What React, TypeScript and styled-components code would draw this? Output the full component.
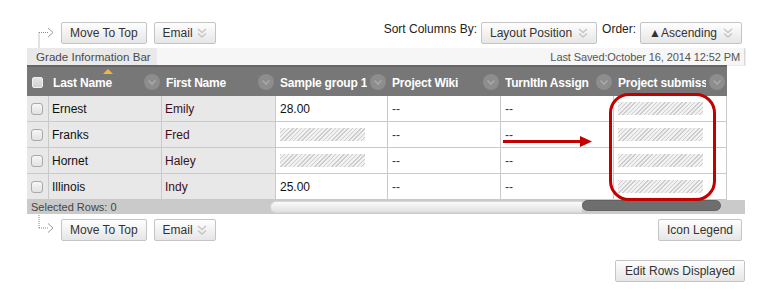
import React from "react";
import styled, { createGlobalStyle } from "styled-components";

const GlobalStyle = createGlobalStyle`
  html, body { margin: 0; padding: 0; background: #ffffff; }
  body { font-family: "Liberation Sans", Arial, sans-serif; }
  * { box-sizing: border-box; }
`;

const Page = styled.div`
  position: relative;
  width: 765px;
  height: 290px;
  padding-top: 22px;
  overflow: hidden;
`;

const ActionRow = styled.div<{ $top?: number }>`
  display: flex;
  align-items: flex-start;
  justify-content: space-between;
  height: ${(p) => (p.$top !== undefined ? "22px" : "26px")};
  margin-top: ${(p) => p.$top ?? 0}px;
  padding-left: 36px;
  padding-right: 23px;
`;

const Group = styled.div`
  display: flex;
  align-items: flex-start;
`;

const FlowArrow = styled.svg<{ $shift?: number }>`
  display: block;
  flex: none;
  width: 20px;
  margin-right: 5px;
  margin-top: ${(p) => p.$shift ?? 0}px;
`;

const Button = styled.button<{ $gap?: number; $pad?: number }>`
  display: inline-flex;
  align-items: center;
  gap: ${(p) => p.$gap ?? 4}px;
  height: 22px;
  padding: 0 ${(p) => p.$pad ?? 8}px;
  margin: 0;
  font-family: "Liberation Sans", Arial, sans-serif;
  font-size: 12px;
  color: #333333;
  background: linear-gradient(#fefefe, #e6e6e6);
  border: 1px solid #c4c4c4;
  border-radius: 2px;
  white-space: nowrap;
  cursor: pointer;
  & + & {
    margin-left: 7px;
  }
`;

const Label = styled.span<{ $before?: number; $after?: number }>`
  font-size: 12px;
  line-height: 14px;
  color: #222222;
  margin-left: ${(p) => p.$before ?? 0}px;
  margin-right: ${(p) => p.$after ?? 4}px;
  white-space: nowrap;
`;

const InfoBar = styled.div`
  display: flex;
  justify-content: space-between;
  align-items: stretch;
  margin-left: 27px;
  width: 718px;
  height: 17px;
  background: #f6f6f6;
  border-right: 1px solid #d8d8d8;
  box-shadow: 1px 1px 0 #ececec;
`;

const InfoTab = styled.div`
  display: flex;
  align-items: center;
  padding: 0 6px 0 9px;
  background: #e9e9e9;
  font-size: 11.6px;
  color: #4a4a4a;
`;

const Saved = styled.div`
  display: flex;
  align-items: center;
  padding-right: 4px;
  font-size: 11px;
  letter-spacing: -0.1px;
  color: #555555;
`;

const Grid = styled.div`
  margin-left: 27px;
  width: 700px;
  display: grid;
  grid-template-columns: 22px 113px 114px 112px 113px 113px 113px;
`;

const HeadCell = styled.div`
  position: relative;
  height: 31px;
  display: flex;
  align-items: center;
  gap: 3px;
  padding-left: 4px;
  padding-right: 2px;
  background: #777777;
  border-top: 2px solid #666666;
  color: #ffffff;
  font-weight: bold;
  font-size: 12px;
  letter-spacing: -0.2px;
`;

const HeadText = styled.span`
  flex: 1;
  min-width: 0;
  overflow: hidden;
  white-space: nowrap;
  padding-top: 3px;
`;

const SortMark = styled.span`
  position: absolute;
  left: 54px;
  top: 2px;
  width: 0;
  height: 0;
  border-left: 5px solid transparent;
  border-right: 5px solid transparent;
  border-bottom: 5px solid #f4b53f;
`;

const HeadBox = styled.span`
  display: block;
  width: 11px;
  height: 11px;
  margin-left: 1px;
  margin-top: 1px;
  background: linear-gradient(#e4e4e4, #d2d2d2);
  border: 1px solid #efefef;
  border-radius: 2px;
`;

const Cell = styled.div<{ $shade?: boolean; $tone?: string; $pad?: number }>`
  height: 26px;
  display: flex;
  align-items: center;
  padding-left: ${(p) => p.$pad ?? 4}px;
  background: ${(p) => (p.$shade ? "#e8e8e8" : "#ffffff")};
  border-right: 1px solid #c9c9c9;
  border-bottom: 1px solid #c9c9c9;
  font-size: 12px;
  color: ${(p) => p.$tone ?? "#111111"};
  white-space: nowrap;
  overflow: hidden;
`;

const RowBox = styled.span`
  display: block;
  width: 12px;
  height: 12px;
  background: linear-gradient(#f6f6f6, #e2e2e2);
  border: 1px solid #a9a9a9;
  border-radius: 3px;
`;

const Hatch = styled.span`
  display: block;
  width: 85px;
  height: 13px;
  background: repeating-linear-gradient(
    135deg,
    #cdcdcd 0px,
    #cdcdcd 1px,
    #f1f1f1 1px,
    #f1f1f1 3px
  );
`;

const StatusBar = styled.div`
  display: flex;
  align-items: stretch;
  margin-left: 27px;
  width: 718px;
  height: 14px;
  background: #cacaca;
`;

const Selected = styled.div`
  width: 243px;
  padding-left: 4px;
  font-size: 11px;
  line-height: 14px;
  color: #444444;
`;

const Track = styled.div`
  flex: 1;
  display: flex;
  align-items: flex-start;
  padding-top: 1px;
`;

const TrackLight = styled.div`
  flex: 1;
  height: 12px;
  border-radius: 7px 0 0 7px;
  background: linear-gradient(#fbfbfb, #e0e0e0);
  border: 1px solid #d6d6d6;
  border-right: none;
`;

const Thumb = styled.div`
  width: 139px;
  height: 11px;
  margin-top: -1px;
  border-radius: 6px;
  background: #6e6e6e;
  border: 1px solid #626262;
`;

const TrackEnd = styled.div`
  width: 24px;
`;

const FooterRow = styled.div`
  display: flex;
  justify-content: flex-end;
  margin-top: 19px;
  padding-right: 20px;
`;

const Highlight = styled.div`
  position: absolute;
  left: 609px;
  top: 93px;
  width: 107px;
  height: 108px;
  border: 3.5px solid #c20000;
  border-radius: 20px;
  pointer-events: none;
`;

const Pointer = styled.svg`
  position: absolute;
  left: 503px;
  top: 135px;
  width: 90px;
  height: 13px;
  pointer-events: none;
`;

const DoubleChevron = () => (
  <svg width="10" height="10" viewBox="0 0 10 10" style={{ display: "block" }}>
    <polyline points="1,1 5,4.5 9,1" fill="none" stroke="#c7c7c7" strokeWidth="1.6" />
    <polyline points="1,5.5 5,9 9,5.5" fill="none" stroke="#c7c7c7" strokeWidth="1.6" />
  </svg>
);

const ColMenu = () => (
  <svg width="16" height="16" viewBox="0 0 16 16" style={{ display: "block", flex: "none" }}>
    <circle cx="8" cy="8" r="8" fill="#8d8d8d" />
    <polyline points="4.5,6.5 8,10 11.5,6.5" fill="none" stroke="#a9a9a9" strokeWidth="1.6" />
  </svg>
);

type Row = {
  last: string;
  first: string;
  grade: string | null;
};

const rows: Row[] = [
  { last: "Ernest", first: "Emily", grade: "28.00" },
  { last: "Franks", first: "Fred", grade: null },
  { last: "Hornet", first: "Haley", grade: null },
  { last: "Illinois", first: "Indy", grade: "25.00" },
];

const headers = [
  "Last Name",
  "First Name",
  "Sample group 1",
  "Project Wiki",
  "TurnItIn Assign",
  "Project submission",
];

const DASH = "#1d3a63";

export default function App() {
  return (
    <>
      <GlobalStyle />
      <Page>
        <ActionRow>
          <Group>
            <FlowArrow height="26" viewBox="0 0 20 26">
              <line x1="3" y1="10.5" x2="3" y2="26" stroke="#8a8a8a" strokeWidth="1" strokeDasharray="1 1" />
              <line x1="3" y1="10.5" x2="13" y2="10.5" stroke="#8a8a8a" strokeWidth="1" strokeDasharray="1 1" />
              <polyline points="12,6 17,10.5 12,15" fill="none" stroke="#9a9a9a" strokeWidth="1" />
            </FlowArrow>
            <Button>Move To Top</Button>
            <Button>
              Email <DoubleChevron />
            </Button>
          </Group>
          <Group>
            <Label>Sort Columns By:</Label>
            <Button $gap={6}>
              Layout Position <DoubleChevron />
            </Button>
            <Label $before={5} $after={4}>
              Order:
            </Label>
            <Button $gap={6} $pad={8}>
              ▲Ascending <DoubleChevron />
            </Button>
          </Group>
        </ActionRow>

        <InfoBar>
          <InfoTab>Grade Information Bar</InfoTab>
          <Saved>Last Saved:October 16, 2014 12:52 PM</Saved>
        </InfoBar>

        <Grid>
          <HeadCell>
            <HeadBox />
          </HeadCell>
          {headers.map((h, i) => (
            <HeadCell key={h}>
              {i === 0 && <SortMark />}
              <HeadText>{h}</HeadText>
              <ColMenu />
            </HeadCell>
          ))}

          {rows.map((r) => (
            <React.Fragment key={r.last}>
              <Cell $shade $pad={4}>
                <RowBox />
              </Cell>
              <Cell $shade $pad={3}>{r.last}</Cell>
              <Cell $shade $pad={3} $tone="#3d1019">
                {r.first}
              </Cell>
              <Cell>{r.grade ?? <Hatch />}</Cell>
              <Cell $tone={DASH}>--</Cell>
              <Cell $tone={DASH}>--</Cell>
              <Cell>
                <Hatch />
              </Cell>
            </React.Fragment>
          ))}
        </Grid>

        <StatusBar>
          <Selected>Selected Rows: 0</Selected>
          <Track>
            <TrackLight />
            <Thumb />
            <TrackEnd />
          </Track>
        </StatusBar>

        <ActionRow $top={5}>
          <Group>
            <FlowArrow height="27" viewBox="0 0 20 27" $shift={-5}>
              <line x1="3" y1="1" x2="3" y2="14" stroke="#8a8a8a" strokeWidth="1" strokeDasharray="1 1" />
              <line x1="3" y1="14" x2="13" y2="14" stroke="#8a8a8a" strokeWidth="1" strokeDasharray="1 1" />
              <polyline points="12,9.5 17,14 12,18.5" fill="none" stroke="#9a9a9a" strokeWidth="1" />
            </FlowArrow>
            <Button>Move To Top</Button>
            <Button>
              Email <DoubleChevron />
            </Button>
          </Group>
          <Button>Icon Legend</Button>
        </ActionRow>

        <FooterRow>
          <Button $pad={9}>Edit Rows Displayed</Button>
        </FooterRow>

        <Highlight />
        <Pointer viewBox="0 0 90 13">
          <rect x="0" y="5" width="78" height="3" fill="#c20000" />
          <polygon points="77,1 89,6.5 77,12" fill="#c20000" />
        </Pointer>
      </Page>
    </>
  );
}
